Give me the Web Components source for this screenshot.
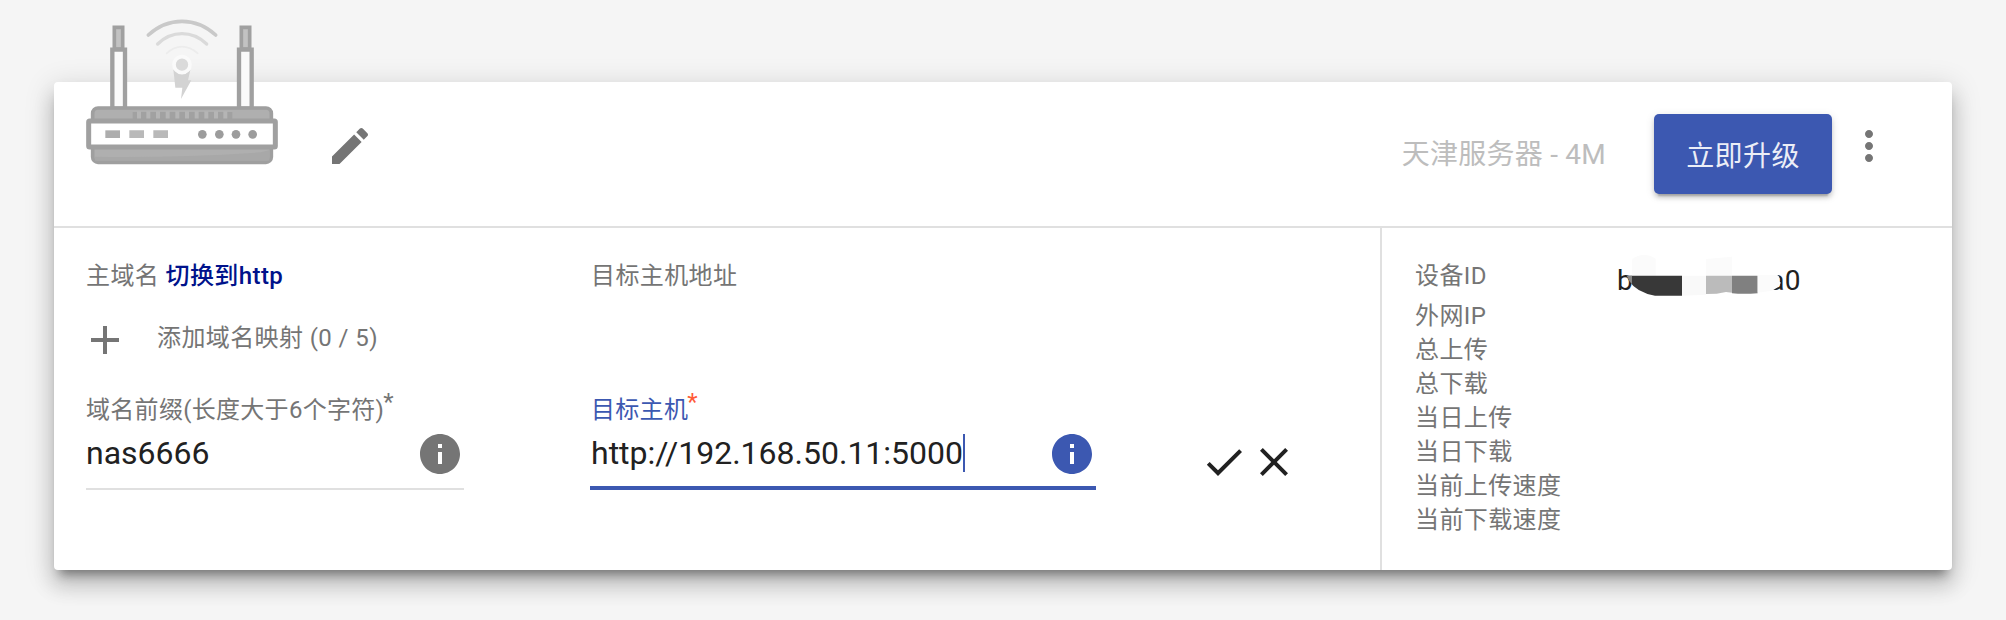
<!DOCTYPE html>
<html lang="zh-CN">
<head>
<meta charset="utf-8">
<title>设备</title>
<style>
html,body{margin:0;height:100%}
body{background:#f5f5f5;font-family:Roboto,"Noto Sans CJK SC",sans-serif;overflow:hidden}
</style>
</head>
<body>
<device-panel></device-panel>
<script>
function define(name, html) {
  const t = document.createElement('template');
  t.innerHTML = html;
  customElements.define(name, class extends HTMLElement {
    constructor() {
      super();
      this.attachShadow({mode: 'open'}).appendChild(t.content.cloneNode(true));
    }
    connectedCallback() {
      if (name === 'md-icon') {
        this.shadowRoot.querySelector('path').setAttribute('d', ICONS[this.getAttribute('name')]);
      }
    }
  });
}
const ICONS = {
  edit: 'M3 17.25V21h3.75L17.81 9.94l-3.75-3.75L3 17.25zM20.71 7.04c.39-.39.39-1.02 0-1.41l-2.34-2.34c-.39-.39-1.02-.39-1.41 0l-1.83 1.83 3.75 3.75 1.83-1.83z',
  more: 'M12 8c1.1 0 2-.9 2-2s-.9-2-2-2-2 .9-2 2 .9 2 2 2zm0 2c-1.1 0-2 .9-2 2s.9 2 2 2 2-.9 2-2-.9-2-2-2zm0 6c-1.1 0-2 .9-2 2s.9 2 2 2 2-.9 2-2-.9-2-2-2z',
  add: 'M19 13h-6v6h-2v-6H5v-2h6V5h2v6h6v2z',
  info: 'M12 2C6.48 2 2 6.48 2 12s4.48 10 10 10 10-4.48 10-10S17.52 2 12 2zm1 15h-2v-6h2v6zm0-8h-2V7h2v2z',
  check: 'M9 16.17L4.83 12l-1.42 1.41L9 19 21 7l-1.41-1.41z',
  close: 'M19 6.41L17.59 5 12 10.59 6.41 5 5 6.41 10.59 12 5 17.59 6.41 19 12 13.41 17.59 19 19 17.59 13.41 12z'
};
define('md-icon', `<style>:host{display:block;flex:none;width:48px;height:48px}svg{display:block;width:100%;height:100%;fill:currentColor}</style>
<svg viewBox="0 0 24 24"><path/></svg>`);

define('router-picture', `<style>:host{display:block;width:192px;height:165px}svg{display:block}</style>
<svg width="192" height="165" viewBox="138 0 576 495" fill="none">
  <g stroke-linecap="round">
    <path d="M325 105Q370 64 426 64T527 105" stroke="#c9c9c9" stroke-width="11"/>
    <path d="M353 132Q385 101 426 101T500 132" stroke="#dadada" stroke-width="10"/>
    <path d="M380 160Q402 140 426 140T473 160" stroke="#ececec" stroke-width="5"/>
  </g>
  <path d="M400 208L419 222H435L451 210L444 241H454L423 297L427 263H406Z" fill="#d3d3d3"/>
  <circle cx="426" cy="194" r="24" fill="#dadada" stroke="#fafafa" stroke-width="11"/>
  <g stroke="#a0a0a0">
    <path d="M223 82H248V147H223ZM604 82H629V147H604Z" fill="#c2c2c2" stroke-width="11"/>
    <path d="M217 149H255V326H217ZM597 149H635V326H597Z" fill="#fafafa" stroke-width="13"/>
  </g>
  <rect x="158" y="324" width="536" height="163" rx="16" fill="#afafaf" stroke="#9f9f9f" stroke-width="11"/>
  <path d="M278 336H577V358H278Z" fill="#a1a1a1"/>
  <path d="M297 334V357M325 334V357M354 334V357M383 334V357M412 334V357M441 334V357M470 334V357M499 334V357M528 334V357M556 334V357" stroke="#b5b5b5" stroke-width="12"/>
  <path d="M165 470Q400 474 662 457L688 451V482H165Z" fill="#a8a8a8"/>
  <rect x="146" y="363" width="560" height="78" rx="3" fill="#fff" stroke="#a0a0a0" stroke-width="15"/>
  <path d="M196 391h44v23h-44z" fill="#adadad"/><path d="M268 391h44v23h-44zM340 391h44v23h-44z" fill="#b9b9b9"/>
  <g fill="#9c9c9c"><circle cx="487" cy="403" r="13"/><circle cx="538" cy="403" r="13"/><circle cx="588" cy="403" r="13"/><circle cx="638" cy="403" r="13"/></g>
</svg>`);

define('raised-button', `<style>:host{display:flex;align-items:center;justify-content:center;box-sizing:border-box;width:178px;height:80px;padding-bottom:1px;border-radius:5px;background:#3c58b1;color:#eceef7;font-size:28px;letter-spacing:.4px;
box-shadow:0 4px 4px rgba(0,0,0,.14),0 2px 10px rgba(0,0,0,.12),0 6px 2px -4px rgba(0,0,0,.2)}</style><slot></slot>`);

define('panel-header', `<style>
:host{display:flex;box-sizing:border-box;height:146px;padding:0 59px 0 32px;border-bottom:2px solid #e0e0e0;color:#757575}
router-picture{margin-top:-82px}
.edit{margin:40px 0 0 48px}
.plan{margin:52px 48px 0 auto;color:#bdbdbd;font-size:28px;line-height:42px;letter-spacing:.25px;white-space:nowrap}
raised-button{margin-top:32px}
.more{margin:40px 0 0 13px}
</style>
<router-picture></router-picture><md-icon class="edit" name="edit"></md-icon>
<div class="plan">天津服务器 - 4M</div><raised-button>立即升级</raised-button><md-icon class="more" name="more"></md-icon>`);

define('text-field', `<style>
:host{display:block;--tone:#757575;--star:#757575}
:host([focused]){--tone:#3c58b1;--star:#ff5a36}
.label{height:36px;line-height:38px;font-size:24px;letter-spacing:.3px;color:var(--tone);white-space:nowrap}
.label i{font-style:normal;color:var(--star);position:relative;top:-8px;left:-1px}
.row{display:flex;align-items:center;justify-content:space-between;height:54px;box-sizing:border-box}
.value{display:flex;align-items:center;margin-top:-2px;color:#212121;font-size:32px;line-height:40px;letter-spacing:0;white-space:nowrap}
:host([focused]) .value{padding-left:1px}
:host([focused]) .value::after{content:"";width:2px;height:38px;background:#3c58b1}
md-icon{color:var(--tone)}
.line{height:2px;margin-top:7px;background:#e0e0e0}
:host([focused]) .line{height:4px;margin-top:5px;background:#3c58b1}
</style>
<div class="label"><slot name="label"></slot><i>*</i></div>
<div class="row"><div class="value"><slot></slot></div><md-icon name="info"></md-icon></div>
<div class="line"></div>`);

define('domain-mapping', `<style>
:host{display:grid;box-sizing:border-box;grid-template-columns:504px 610px auto;grid-template-rows:50px 72px auto;width:1326px;padding:23px 0 0 32px;font-size:24px;letter-spacing:.4px;color:#757575;line-height:50px;white-space:nowrap}
b{color:#00128b;font-weight:500}
.wide{grid-column:span 2;padding-left:1px}
.add{display:flex;align-items:center;gap:28px;margin-left:-5px;height:78px}
.add span{position:relative;top:-2px}
text-field{margin-top:18px}
.one{width:378px}.two{width:506px}
.two span{margin-left:1px}
.acts{display:flex;gap:2px;margin-top:65px;color:#212121}
</style>
<div>主域名 <b>切换到http</b></div><div class="wide">目标主机地址</div>
<div class="add"><md-icon name="add"></md-icon><span>添加域名映射 (0 / 5)</span></div><div class="wide"></div>
<text-field class="one"><span slot="label">域名前缀(长度大于6个字符)</span>nas6666</text-field>
<text-field class="two" focused><span slot="label">目标主机</span>http://192.168.50.11:5000</text-field>
<div class="acts"><md-icon name="check"></md-icon><md-icon name="close"></md-icon></div>`);

define('masked-id', `<style>
:host{display:block;position:relative;width:184px;height:48px;color:#212121;font-size:28px;line-height:50px}
.t{display:flex;justify-content:space-between}
svg{position:absolute;left:-27px;top:-16px}
</style>
<div class="t"><span>b</span><span>a0</span></div>
<svg width="240" height="70" viewBox="0 0 720 210">
<path d="M126 107V59Q140 45 162 45T197 57V107ZM348 107V57L426 50V107Z" fill="#fbfbfb"/>
<path d="M110 107H276V167H195Q140 158 118 124Z" fill="#383838"/><path d="M110 107H126V133Q117 124 110 107Z" fill="#858585"/>
<path d="M276 107H348V164L276 167Z" fill="#f9f9f9"/><path d="M348 107H426V158L408 156L380 161L348 162Z" fill="#bbb"/>
<path d="M426 107H503V160Q460 163 426 160Z" fill="#808080"/><path d="M503 105H562Q572 112 567 120L572 128Q568 142 545 152L503 158Z" fill="#fbfbfb"/>
</svg>`);

define('device-stats', `<style>
:host{display:grid;box-sizing:border-box;flex:1;grid-template-columns:203px auto;grid-template-rows:47px repeat(7,34px);align-content:start;padding:24px 0 0 33px;border-left:2px solid #e0e0e0;font-size:24px;letter-spacing:.4px;line-height:34px;color:#757575}
div{grid-column:1}.first{line-height:48px}
masked-id{grid-area:1/2;margin:4px 0 -5px -1px}
</style>
<div class="first">设备ID</div><masked-id></masked-id>
<div>外网IP</div><div>总上传</div><div>总下载</div><div>当日上传</div><div>当日下载</div><div>当前上传速度</div><div>当前下载速度</div>`);

define('device-panel', `<style>
:host{display:flow-root}
section{box-sizing:border-box;width:1898px;height:488px;margin:82px 0 0 54px;background:#fff;border-radius:4px;
box-shadow:0 16px 20px 2px rgba(0,0,0,.14),0 6px 28px 4px rgba(0,0,0,.12),0 10px 10px -6px rgba(0,0,0,.4)}
.body{display:flex;height:342px}
</style>
<section><panel-header></panel-header><div class="body"><domain-mapping></domain-mapping><device-stats></device-stats></div></section>`);
</script>
</body>
</html>
